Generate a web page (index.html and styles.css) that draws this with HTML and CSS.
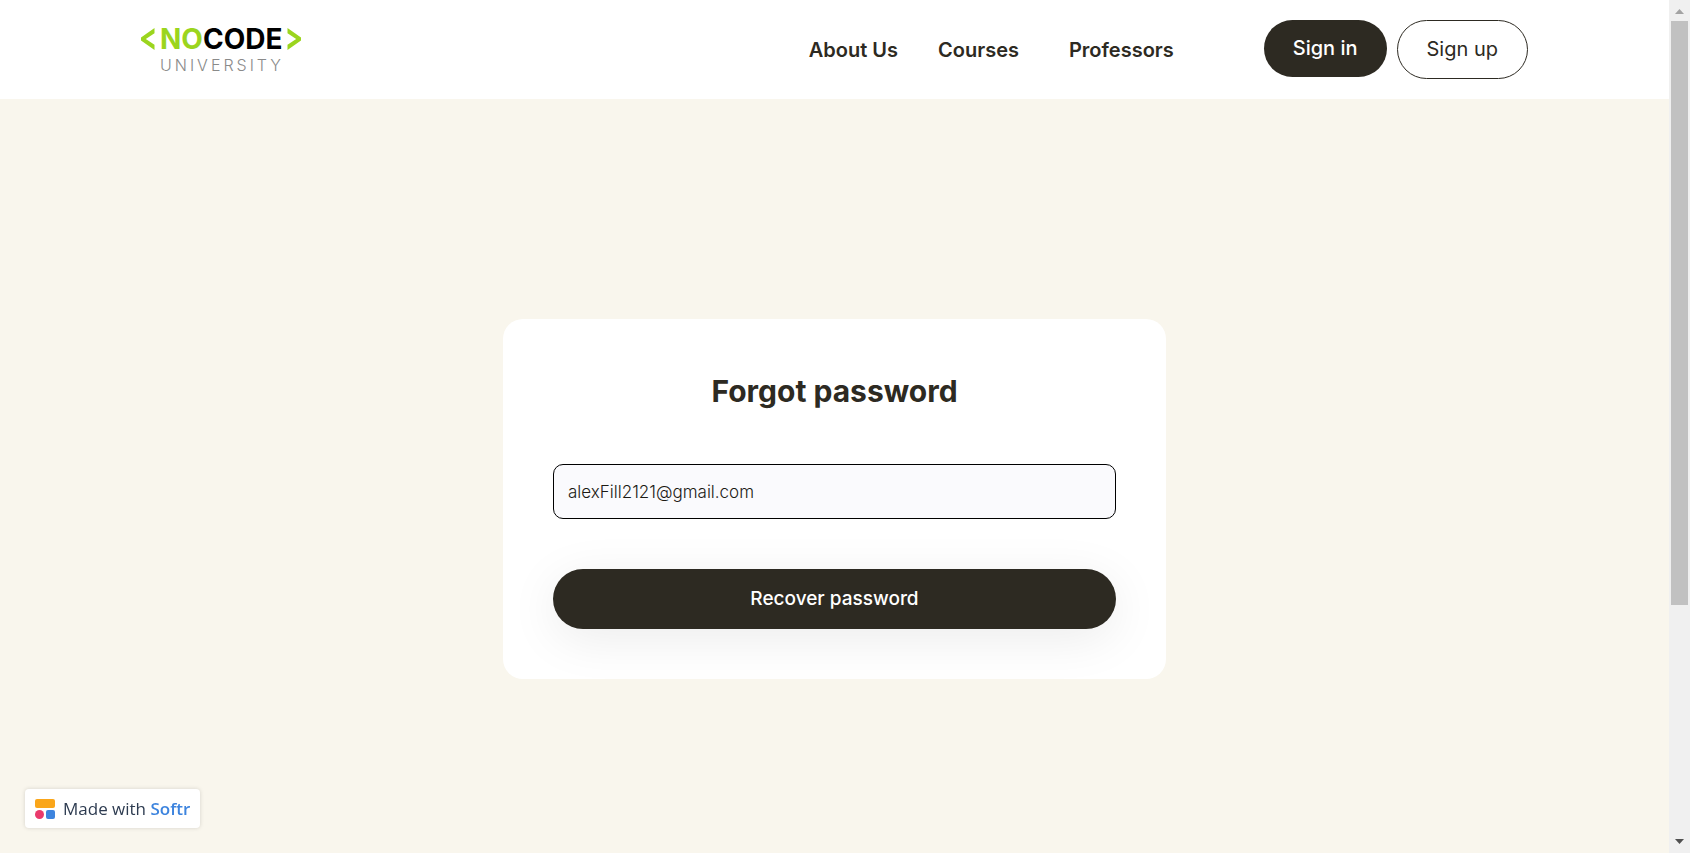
FILE: index.html
```html
<!DOCTYPE html>
<html lang="en">
<head>
<meta charset="utf-8">
<meta name="viewport" content="width=device-width, initial-scale=1">
<title>Forgot password</title>
<link rel="stylesheet" href="styles.css">
</head>
<body>
<div class="window">
  <div class="page">
    <header class="header">
      <a class="logo" href="#" aria-label="NoCode University">
        <svg class="logo-bracket" viewBox="0 0 14 22" aria-hidden="true"><path d="M13.5 0v5.2L4.8 11l8.7 5.8V22L0 12.6V9.4z"/></svg>
        <span class="logo-text">
          <span class="logo-name"><span class="logo-accent">NO</span>CODE</span>
          <span class="logo-sub">UNIVERSITY</span>
        </span>
        <svg class="logo-bracket" viewBox="0 0 14 22" aria-hidden="true"><path d="M.5 0v5.2L9.2 11 .5 16.8V22L14 12.6V9.4z"/></svg>
      </a>
      <nav class="nav">
        <a class="nav-link" href="#">About Us</a>
        <a class="nav-link nav-link-wide" href="#">Courses</a>
        <a class="nav-link" href="#">Professors</a>
      </nav>
      <div class="actions">
        <button class="btn btn-dark" type="button">Sign in</button>
        <button class="btn btn-outline" type="button">Sign up</button>
      </div>
    </header>
    <main class="main">
      <form class="card">
        <h1 class="title">Forgot password</h1>
        <input class="field" type="email" aria-label="Email" value="alexFill2121@gmail.com">
        <button class="submit" type="button">Recover password</button>
      </form>
    </main>
  </div>
  <div class="scrollbar" aria-hidden="true">
    <svg class="arrow arrow-up" viewBox="0 0 9 5"><path d="M0 5 4.5 0 9 5z"/></svg>
    <div class="track"><div class="thumb"></div></div>
    <svg class="arrow arrow-down" viewBox="0 0 9 5"><path d="M0 0h9L4.5 5z"/></svg>
  </div>
</div>
<a class="badge" href="#">
  <svg class="badge-icon" viewBox="0 0 20 20" aria-hidden="true">
    <rect width="20" height="9" rx="2" fill="#faa61a"/>
    <circle cx="4.5" cy="15.5" r="4.5" fill="#ea3a6c"/>
    <rect x="11" y="11" width="9" height="9" rx="2" fill="#3d84de"/>
  </svg>
  <span>Made with <span class="badge-brand">Softr</span></span>
</a>
</body>
</html>
```
FILE: styles.css
```css
* {
  box-sizing: border-box;
}

body {
  margin: 0;
  font-family: Inter, "Liberation Sans", sans-serif;
  color: #2d2a22;
}

a {
  color: inherit;
  text-decoration: none;
}

button,
input {
  font-family: inherit;
}

.window {
  display: flex;
  height: 100vh;
}

.page {
  flex: 1;
  overflow: hidden;
  background: #f9f6ed;
}

.header {
  display: flex;
  align-items: flex-start;
  padding: 20px 141px;
  background: #fff;
}

.logo {
  display: flex;
  gap: 5px;
  padding-top: 8px;
  margin-right: auto;
}

.logo-bracket {
  width: 14px;
  height: 22px;
  fill: #9bd51e;
}

.logo-text {
  display: flex;
  flex-direction: column;
  gap: 7px;
}

.logo-name {
  font-size: 28px;
  line-height: 22px;
  font-weight: 700;
  color: #000;
}

.logo-accent {
  color: #9bd51e;
}

.logo-sub {
  margin-right: -3px;
  font-size: 16px;
  line-height: 16px;
  font-weight: 300;
  letter-spacing: 3px;
  color: #8a8a8a;
}

.nav {
  display: flex;
  gap: 40px;
  padding-top: 15px;
  margin-right: 90px;
}

.nav-link {
  font-size: 20px;
  line-height: 30px;
  font-weight: 600;
}

.nav-link-wide {
  margin-right: 10px;
}

.actions {
  display: flex;
  align-items: flex-start;
  gap: 10px;
}

.btn {
  padding: 14px 29px;
  border: 0;
  border-radius: 30px;
  font-size: 20px;
  line-height: 29px;
}

.btn-dark {
  background: #2d2a22;
  color: #fff;
  font-weight: 500;
}

.btn-outline {
  border: 1px solid #2d2a22;
  background: #fff;
  color: #2d2a22;
  font-weight: 400;
}

.main {
  display: flex;
  justify-content: center;
  padding: 220px 24px;
}

.card {
  display: flex;
  flex-direction: column;
  width: 100%;
  max-width: 663px;
  padding: 50px;
  border-radius: 20px;
  background: #fff;
}

.title {
  margin: 0 0 50px;
  font-size: 30px;
  line-height: 45px;
  font-weight: 700;
  text-align: center;
}

.field {
  margin-bottom: 50px;
  padding: 14px;
  border: 1px solid #000;
  border-radius: 10px;
  background: #fafafd;
  color: #1c1a15;
  font-size: 17px;
  line-height: 25px;
  height: 55px;
  font-weight: 300;
}

.submit {
  padding: 15px 30px;
  border: 0;
  border-radius: 30px;
  background: #2d2a22;
  box-shadow: 0 10px 50px rgba(0, 0, 0, 0.08);
  color: #fff;
  font-size: 19px;
  line-height: 30px;
  font-weight: 500;
}

.scrollbar {
  display: flex;
  flex-direction: column;
  align-items: center;
  width: 21px;
  padding: 9px 0;
  background: #f0f0f0;
}

.arrow {
  width: 9px;
  height: 5px;
}

.arrow-up {
  fill: #a3a3a3;
}

.arrow-down {
  fill: #505050;
}

.track {
  flex: 1;
  width: 17px;
  margin: 7px 0;
}

.thumb {
  height: 72%;
  background: #c1c1c1;
}

.badge {
  position: fixed;
  left: 25px;
  bottom: 25px;
  display: flex;
  align-items: center;
  gap: 8px;
  padding: 7px 10px;
  border-radius: 4px;
  background: #fff;
  box-shadow: 0 0 4px rgba(0, 0, 0, 0.15);
  color: #2d3b50;
  font-family: "Open Sans", "Noto Sans", sans-serif;
  font-size: 17px;
  line-height: 25px;
}

.badge-icon {
  width: 20px;
  height: 20px;
}

.badge-brand {
  color: #3d84de;
  font-weight: 600;
}
```
